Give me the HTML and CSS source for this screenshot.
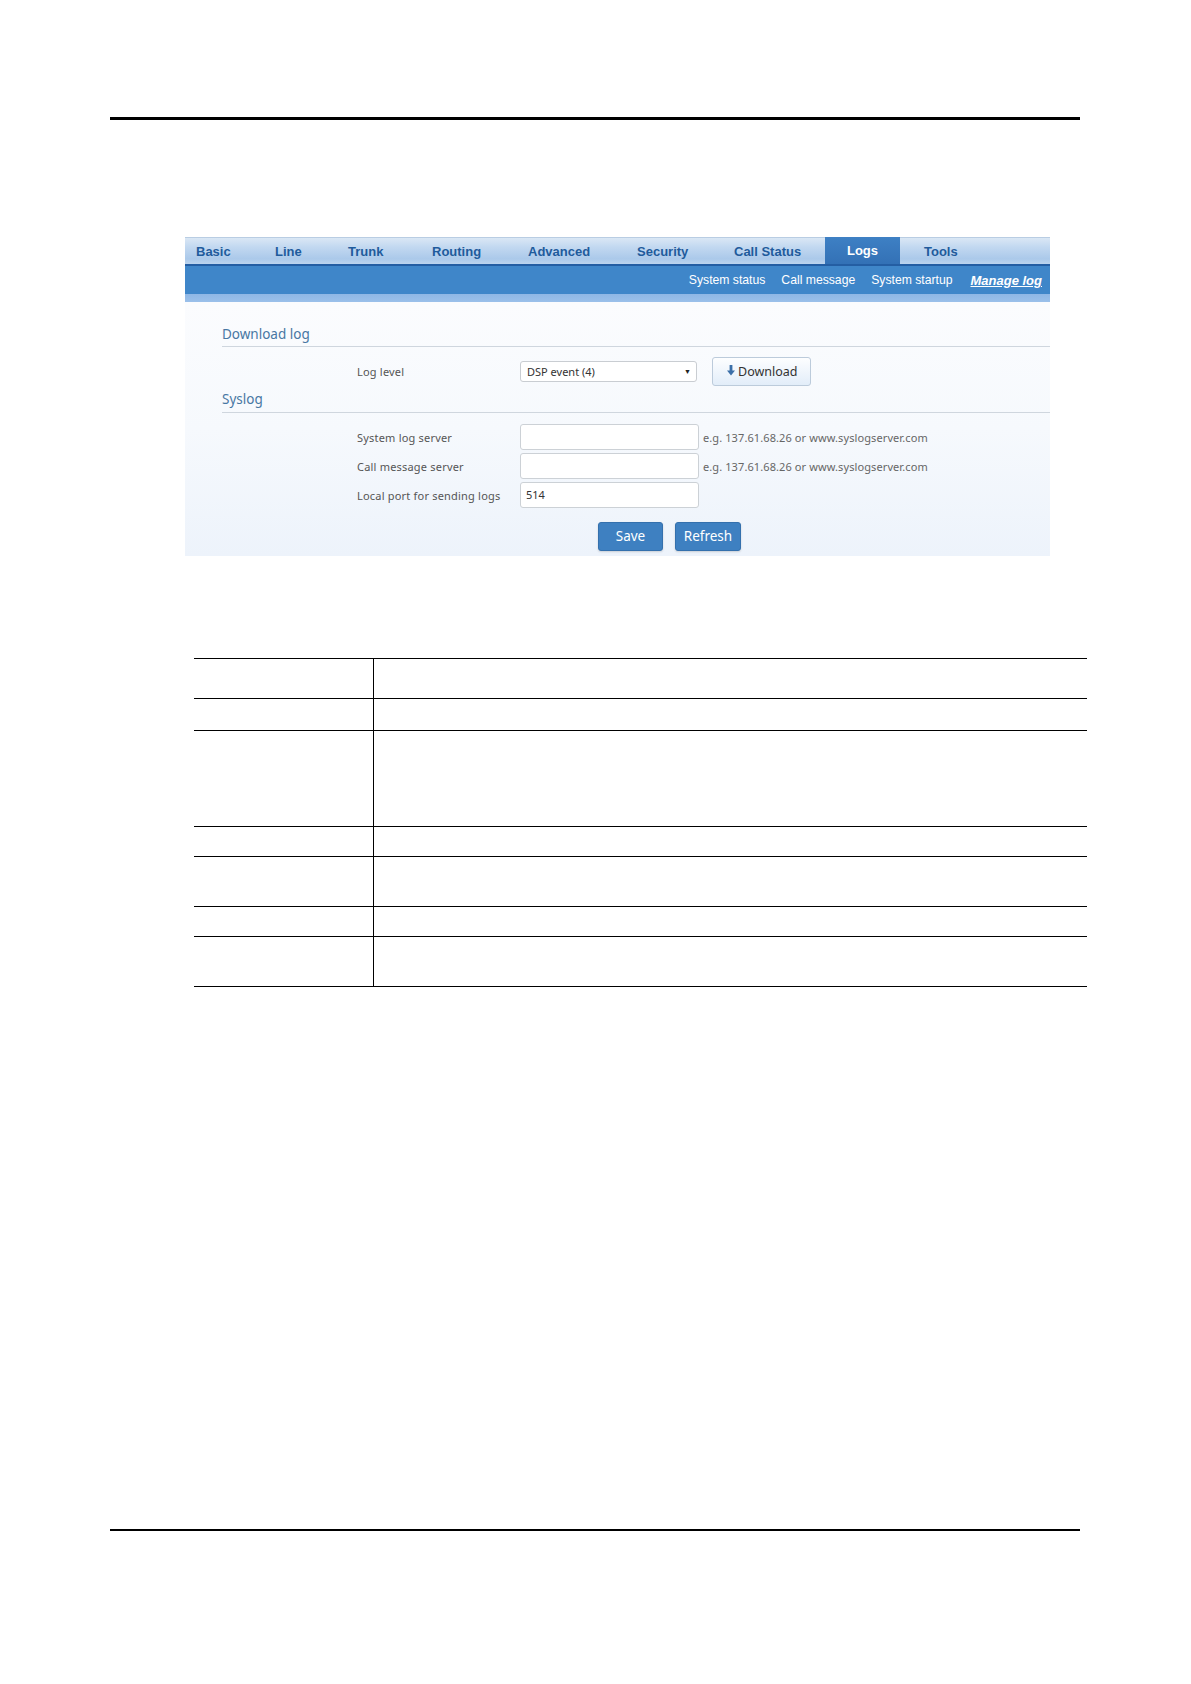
FILE: index.html
```html
<!DOCTYPE html>
<html>
<head>
<meta charset="utf-8">
<link rel="stylesheet" href="styles.css">
</head>
<body>
<div class="page">
  <div class="rule-top"></div>

  <div class="panel">
    <div class="tabs">
      <div class="tab w-basic">Basic</div>
      <div class="tab w-line">Line</div>
      <div class="tab w-trunk">Trunk</div>
      <div class="tab w-routing">Routing</div>
      <div class="tab w-adv">Advanced</div>
      <div class="tab w-sec">Security</div>
      <div class="tab w-call">Call Status</div>
      <div class="tab active">Logs</div>
      <div class="tab w-tools">Tools</div>
    </div>
    <div class="subnav">
      <span class="sublink">System status</span>
      <span class="sublink">Call message</span>
      <span class="sublink">System startup</span>
      <span class="sublink current">Manage log</span>
    </div>
    <div class="strip"></div>

    <div class="body">
      <div class="section-title first">Download log</div>
      <div class="row row-log">
        <div class="label">Log level</div>
        <div class="select">
          <span>DSP event (4)</span>
          <span class="caret">&#9660;</span>
        </div>
        <div class="btn-download">
          <svg class="dl-icon" width="8" height="11" viewBox="0 0 8 11"><path d="M2.6 0h2.8v5.5H8L4 10.5 0 5.5h2.6z" fill="#3b6fa8"/></svg>
          <span>Download</span>
        </div>
      </div>

      <div class="section-title second">Syslog</div>
      <div class="fields">
        <div class="row">
          <div class="label">System log server</div>
          <div class="input"></div>
          <div class="hint">e.g. 137.61.68.26 or www.syslogserver.com</div>
        </div>
        <div class="row">
          <div class="label">Call message server</div>
          <div class="input"></div>
          <div class="hint">e.g. 137.61.68.26 or www.syslogserver.com</div>
        </div>
        <div class="row">
          <div class="label">Local port for sending logs</div>
          <div class="input">514</div>
        </div>
      </div>
      <div class="actions">
        <div class="btn">Save</div>
        <div class="btn btn-refresh">Refresh</div>
      </div>
    </div>
  </div>

  <div class="table">
    <div class="trow h40"><div class="c1"></div><div class="c2"></div></div>
    <div class="trow h32"><div class="c1"></div><div class="c2"></div></div>
    <div class="trow h96"><div class="c1"></div><div class="c2"></div></div>
    <div class="trow h30"><div class="c1"></div><div class="c2"></div></div>
    <div class="trow h50"><div class="c1"></div><div class="c2"></div></div>
    <div class="trow h30"><div class="c1"></div><div class="c2"></div></div>
    <div class="trow h50 last"><div class="c1"></div><div class="c2"></div></div>
  </div>

  <div class="rule-bottom"></div>
</div>
</body>
</html>
```

FILE: styles.css
```css
html, body {
  margin: 0;
  padding: 0;
  background: #ffffff;
}

.page {
  width: 1191px;
  height: 1684px;
  padding-top: 117px;
  box-sizing: border-box;
  font-family: "Noto Sans", "Open Sans", sans-serif;
}

.rule-top {
  margin-left: 110px;
  width: 970px;
  height: 3px;
  background: #000;
}

.panel {
  margin-top: 117px;
  margin-left: 185px;
  width: 865px;
}

.tabs {
  display: flex;
  height: 26px;
  padding-left: 11px;
  border-top: 1px solid #b9cde3;
  border-bottom: 2px solid #245ea3;
  background: linear-gradient(to bottom, #dae7f5 0%, #c2d8f0 35%, #abc9ea 80%, #bcd4ee 100%);
  box-sizing: content-box;
}

.tab {
  font-family: "Liberation Sans", Arial, sans-serif;
  font-weight: bold;
  font-size: 13px;
  color: #1f5b9c;
  line-height: 27px;
  white-space: nowrap;
}

.w-basic { width: 79px; }
.w-line { width: 73px; }
.w-trunk { width: 84px; }
.w-routing { width: 96px; }
.w-adv { width: 109px; }
.w-sec { width: 97px; }
.w-call { width: 91px; }
.w-tools { padding-left: 24px; }

.tab.active {
  width: 75px;
  margin-top: -1px;
  line-height: 28px;
  text-align: center;
  color: #ffffff;
  background: linear-gradient(to bottom, #3e80c4, #3371b6);
}

.subnav {
  height: 28px;
  display: flex;
  justify-content: flex-end;
  align-items: center;
  padding-right: 8px;
  background: #3f86c9;
}

.sublink {
  font-family: "Liberation Sans", Arial, sans-serif;
  font-size: 12.2px;
  color: #ffffff;
  margin-left: 16px;
}

.sublink.current {
  font-size: 13px;
  font-weight: bold;
  font-style: italic;
  text-decoration: underline;
  margin-left: 18px;
}

.strip {
  height: 8px;
  background: linear-gradient(to bottom, #8fb7e5, #9bc0ea);
}

.body {
  height: 254px;
  box-sizing: border-box;
  padding-left: 37px;
  padding-top: 24px;
  background: linear-gradient(to bottom, #fbfcfe 0%, #f6f9fd 50%, #edf3fb 100%);
}

.section-title {
  font-size: 13.5px;
  line-height: 16px;
  padding-bottom: 4px;
  color: #4877a3;
  border-bottom: 1px solid #cfd6de;
}

.section-title.second {
  margin-top: 5px;
  padding-bottom: 5px;
}

.row {
  display: flex;
  align-items: center;
}

.row-log {
  margin-top: 10px;
  height: 29px;
}

.label {
  width: 163px;
  margin-left: 135px;
  font-size: 11px;
  color: #555;
  letter-spacing: 0.2px;
  white-space: nowrap;
}

.select {
  width: 177px;
  height: 21px;
  box-sizing: border-box;
  border: 1px solid #c9cdd2;
  border-radius: 3px;
  background: #fff;
  display: flex;
  align-items: center;
  justify-content: space-between;
  padding: 0 5px 0 6px;
  font-size: 11px;
  color: #333;
}

.caret {
  font-size: 7px;
  color: #222;
}

.btn-download {
  margin-left: 15px;
  width: 99px;
  height: 29px;
  box-sizing: border-box;
  border: 1px solid #bccbdb;
  border-radius: 3px;
  background: linear-gradient(to bottom, #fdfeff, #e2edf9);
  display: flex;
  align-items: center;
  padding-left: 14px;
  font-size: 12.5px;
  color: #333;
}

.dl-icon {
  margin-right: 3px;
  margin-top: -2px;
}

.fields {
  margin-top: 11px;
  display: flex;
  flex-direction: column;
  gap: 3px;
}

.input {
  width: 179px;
  height: 26px;
  box-sizing: border-box;
  border: 1px solid #ccd1d6;
  border-radius: 3px;
  background: #fff;
  font-size: 11px;
  color: #333;
  line-height: 24px;
  padding-left: 5px;
}

.hint {
  margin-left: 4px;
  font-size: 11px;
  letter-spacing: 0.1px;
  color: #666;
  white-space: nowrap;
}

.actions {
  margin-top: 14px;
  margin-left: 376px;
  display: flex;
  gap: 12px;
}

.btn {
  width: 65px;
  height: 29px;
  box-sizing: border-box;
  border: 1px solid #3470ad;
  border-radius: 3px;
  background: #3e80c1;
  color: #fff;
  font-size: 13.5px;
  text-align: center;
  line-height: 27px;
  box-shadow: 0 1px 2px rgba(0, 0, 0, 0.15);
}

.btn-refresh {
  width: 66px;
}

.table {
  margin-top: 102px;
  margin-left: 194px;
  width: 893px;
}

.trow {
  display: grid;
  grid-template-columns: 180px 1fr;
  border-top: 1px solid #000;
  box-sizing: border-box;
}

.trow.last {
  border-bottom: 1px solid #000;
}

.c1 {
  border-right: 1px solid #000;
}

.h40 { height: 40px; }
.h32 { height: 32px; }
.h96 { height: 96px; }
.h30 { height: 30px; }
.h50 { height: 50px; }
.trow.last.h50 { height: 51px; }

.rule-bottom {
  margin-top: 542px;
  margin-left: 110px;
  width: 970px;
  height: 2px;
  background: #000;
}
```
